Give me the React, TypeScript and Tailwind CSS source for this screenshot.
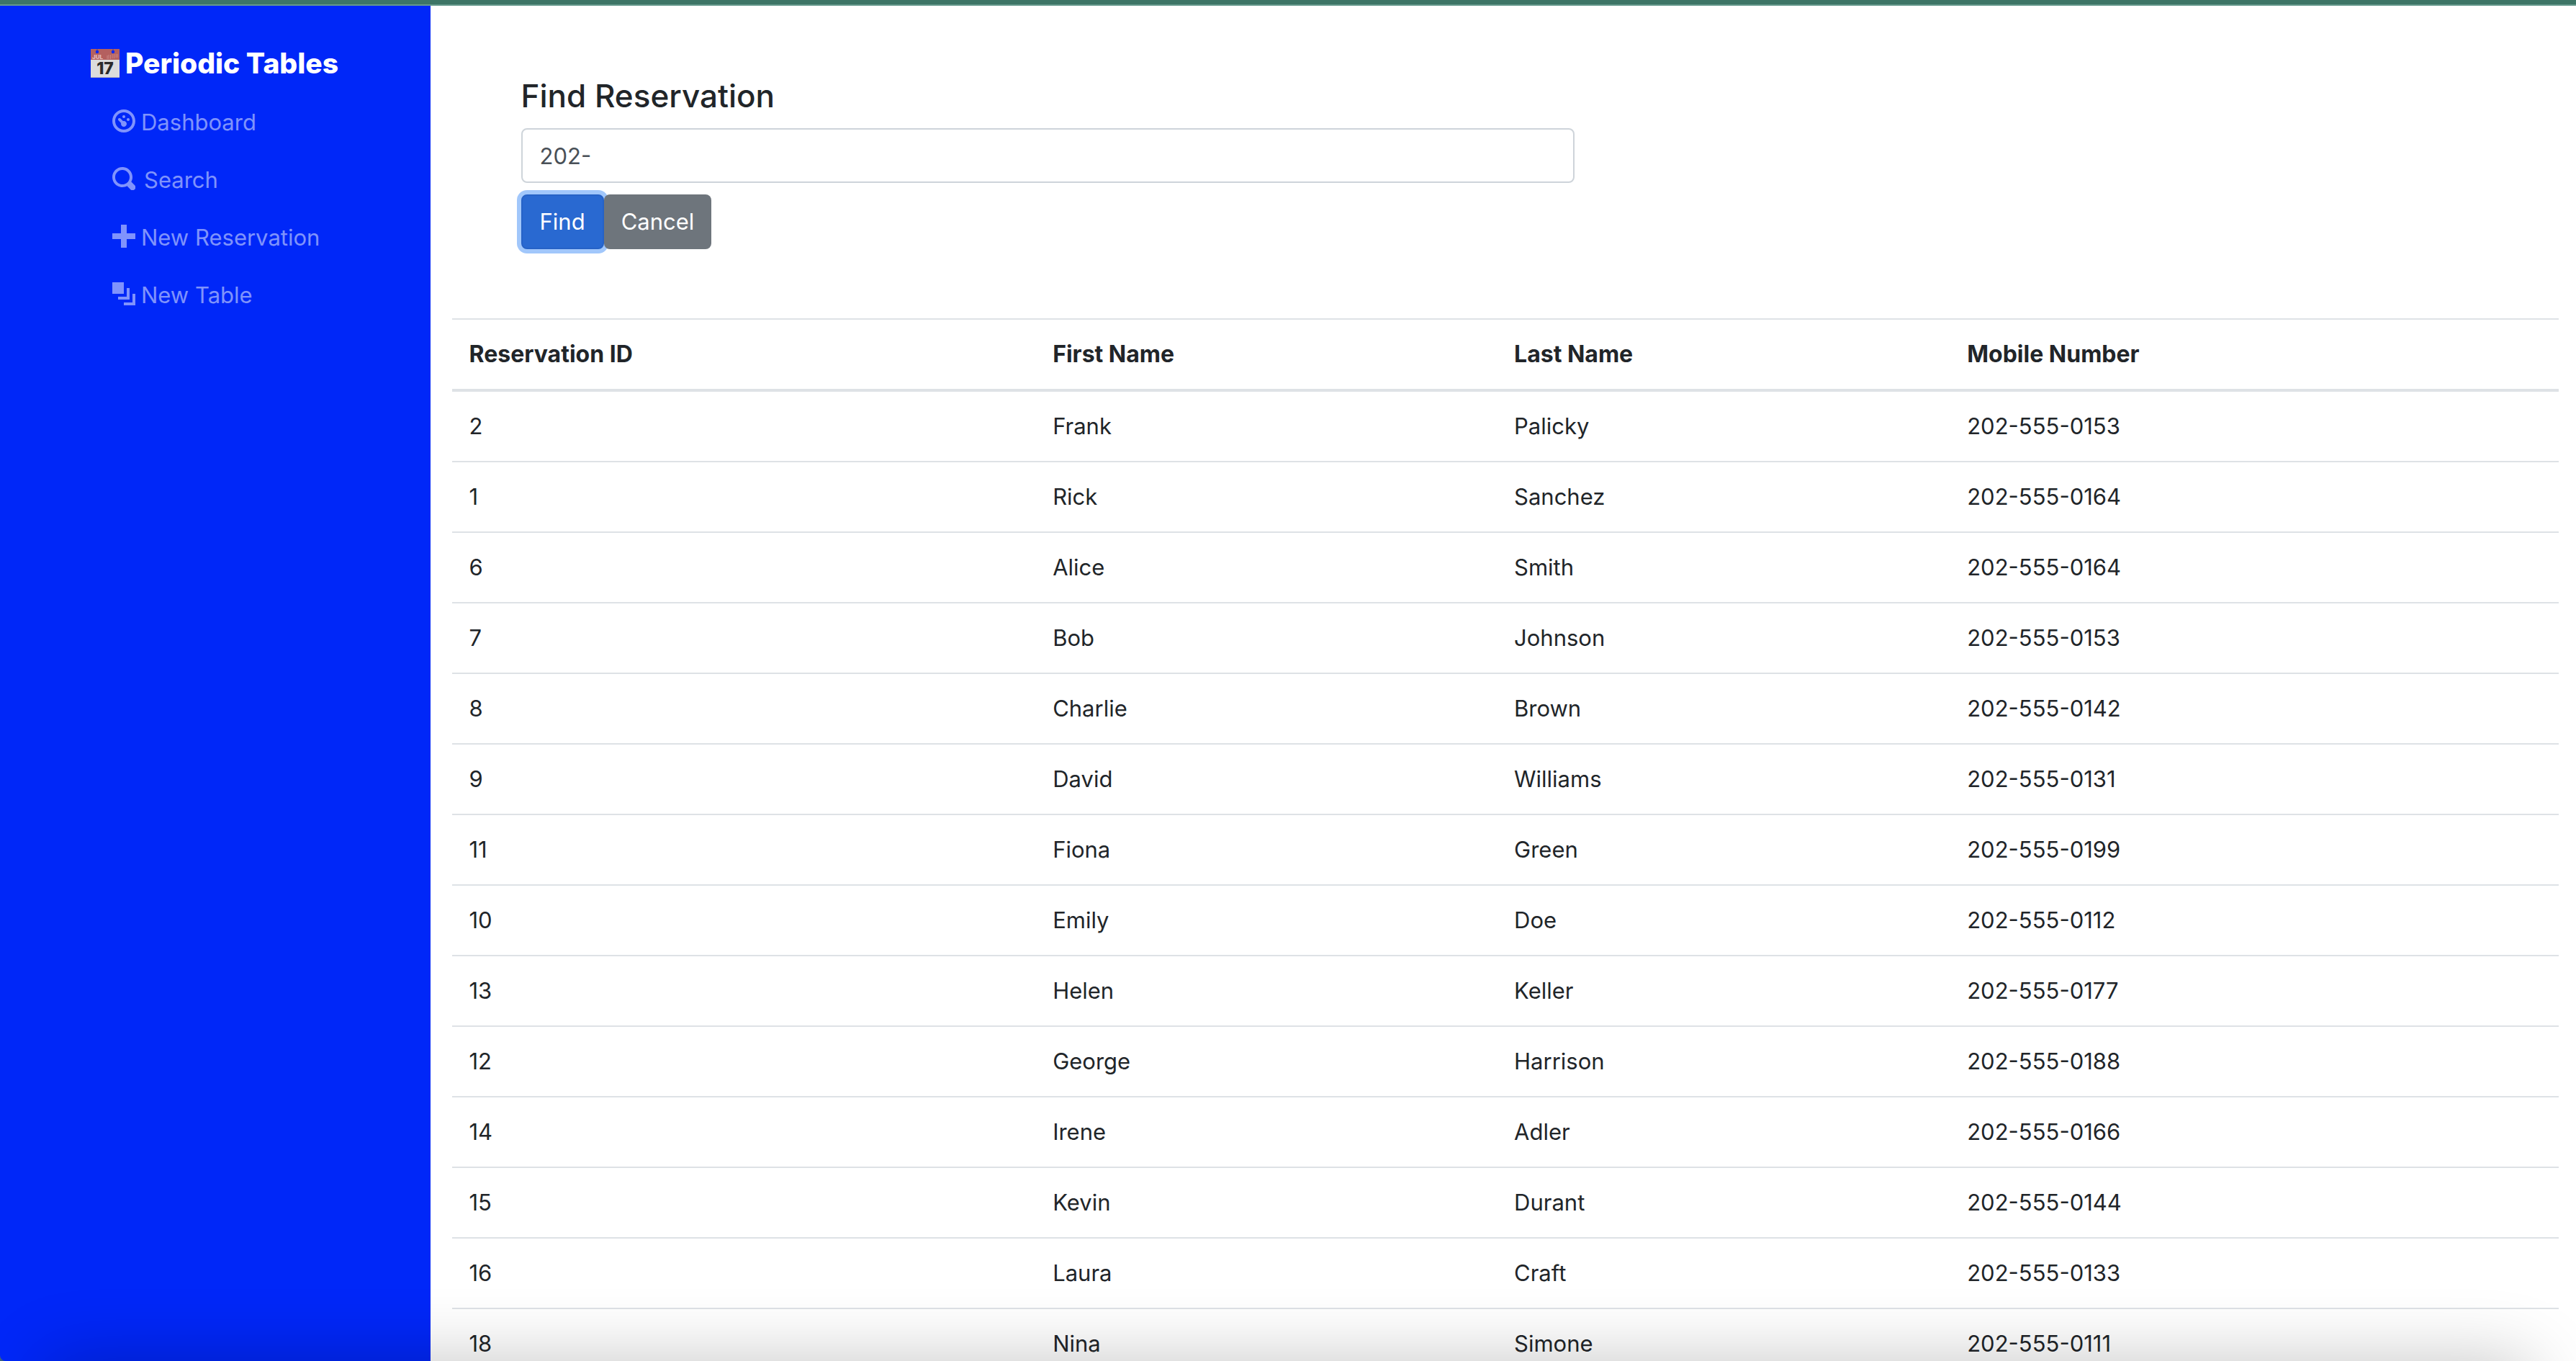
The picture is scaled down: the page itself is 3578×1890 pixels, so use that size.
const reservations = [
  [2, "Frank", "Palicky", "202-555-0153"],
  [1, "Rick", "Sanchez", "202-555-0164"],
  [6, "Alice", "Smith", "202-555-0164"],
  [7, "Bob", "Johnson", "202-555-0153"],
  [8, "Charlie", "Brown", "202-555-0142"],
  [9, "David", "Williams", "202-555-0131"],
  [11, "Fiona", "Green", "202-555-0199"],
  [10, "Emily", "Doe", "202-555-0112"],
  [13, "Helen", "Keller", "202-555-0177"],
  [12, "George", "Harrison", "202-555-0188"],
  [14, "Irene", "Adler", "202-555-0166"],
  [15, "Kevin", "Durant", "202-555-0144"],
  [16, "Laura", "Craft", "202-555-0133"],
  [18, "Nina", "Simone", "202-555-0111"],
];

const links = [
  {
    label: "Dashboard",
    d: "M4 0c-2.2 0-4 1.8-4 4s1.8 4 4 4 4-1.8 4-4-1.8-4-4-4zm0 1c1.66 0 3 1.34 3 3s-1.34 3-3 3-3-1.34-3-3 1.34-3 3-3zm0 1c-.28 0-.5.22-.5.5s.22.5.5.5.5-.22.5-.5-.22-.5-.5-.5zm-1.66 1a.5.5 0 0 0-.19.84l.91.91c-.02.08-.06.16-.06.25 0 .55.45 1 1 1s1-.45 1-1-.45-1-1-1c-.09 0-.17.04-.25.06l-.91-.91a.5.5 0 0 0-.44-.16.5.5 0 0 0-.06 0zm3.16 0c-.28 0-.5.22-.5.5s.22.5.5.5.5-.22.5-.5-.22-.5-.5-.5z",
  },
  {
    label: "Search",
    d: "M3.5 0c-1.93 0-3.5 1.57-3.5 3.5s1.57 3.5 3.5 3.5c.59 0 1.17-.14 1.66-.41a1 1 0 0 0 .13.13l1 1a1.02 1.02 0 1 0 1.44-1.44l-1-1a1 1 0 0 0-.16-.13c.27-.49.44-1.06.44-1.66 0-1.93-1.55-3.5-3.5-3.5zm0 1c1.39 0 2.5 1.11 2.5 2.5 0 .66-.24 1.27-.66 1.72-.01.01-.02.02-.03.03a1 1 0 0 0-.13.13c-.44.4-1.04.63-1.69.63-1.39 0-2.5-1.11-2.5-2.5s1.11-2.5 2.5-2.5z",
  },
  { label: "New Reservation", d: "M3 0v3h-3v2h3v3h2v-3h3v-2h-3v-3h-2z" },
  {
    label: "New Table",
    d: "M0 0v4h4v-4h-4zm5 2v3h-3v1h4v-4h-1zm2 2v3h-3v1h4v-4h-1z",
  },
];

function CalendarIcon() {
  return (
    <svg viewBox="0 0 40 40" className="size-10 shrink-0" aria-hidden="true">
      <rect width="40" height="40" fill="#dcdcdc" />
      <rect width="40" height="15" fill="#b4605f" />
      <rect y="39" width="40" height="1" fill="#a9a9c4" />
      <circle cx="9" cy="4" r="2.2" fill="#0027f8" />
      <circle cx="31" cy="4" r="2.2" fill="#0027f8" />
      <path d="M9 0v2M31 0v2" stroke="#6f4a86" strokeWidth="1.5" />
      <path
        d="M23 9v5M25 8v6M27.500 8v6M30 7v6M32.500 7v6M35 7v5M37 7v5"
        stroke="#c98583"
        strokeWidth="1"
      />
      <text x="2" y="13.500" fontFamily="Inter, sans-serif" fontSize="8" fill="#e3bdbc">
        JUL
      </text>
      <text
        x="20"
        y="35"
        textAnchor="middle"
        fontFamily="Inter, sans-serif"
        fontSize="23"
        fill="#2b2b2b"
      >
        17
      </text>
    </svg>
  );
}

function Sidebar() {
  return (
    <nav className="w-[16.7%] shrink-0 rounded-bl-lg bg-[#0027f8] pt-12">
      <a
        href="#"
        className="mb-[10px] ml-[126px] flex h-16 items-center gap-2 text-[39px] font-extrabold text-white"
      >
        <CalendarIcon />
        <span>Periodic Tables</span>
      </a>
      <ul className="ml-[156px]">
        {links.map((link) => (
          <li key={link.label}>
            <a href="#" className="flex h-20 items-center gap-2 text-white/50">
              <svg viewBox="0 0 8 8" className="mb-1 size-8 shrink-0 fill-current" aria-hidden="true">
                <path d={link.d} />
              </svg>
              <span className={link.label === "Search" ? "ml-1" : ""}>{link.label}</span>
            </a>
          </li>
        ))}
      </ul>
    </nav>
  );
}

function SearchForm() {
  return (
    <form className="ml-24 w-1/2 py-24" onSubmit={(e) => e.preventDefault()}>
      <label
        htmlFor="mobile_number"
        className="mb-4 block text-[44px] leading-[58px] font-medium"
      >
        Find Reservation
      </label>
      <input
        id="mobile_number"
        type="text"
        defaultValue="202-"
        className="mb-4 block h-19 w-full rounded-lg border-2 border-[#ced4da] bg-white px-6 text-[#495057] outline-none"
      />
      <div className="flex">
        <button
          type="submit"
          className="h-19 rounded-lg border-2 border-[#2662c6] bg-[#2969d1] px-6 text-white shadow-[0_0_0_6px_#a1c7fb]"
        >
          Find
        </button>
        <button type="button" className="relative h-19 rounded-lg bg-[#6e757c] px-6 text-white">
          Cancel
        </button>
      </div>
    </form>
  );
}

function ReservationTable() {
  return (
    <table className="w-full table-fixed border-separate border-spacing-0 text-left">
      <colgroup>
        <col className="w-[27.7%]" />
        <col className="w-[21.9%]" />
        <col className="w-[21.5%]" />
        <col />
      </colgroup>
      <thead>
        <tr>
          {["Reservation ID", "First Name", "Last Name", "Mobile Number"].map((h) => (
            <th
              key={h}
              scope="col"
              className="border-t-2 border-b-4 border-[#dee2e6] p-6 text-[32px] leading-[48px] font-bold"
            >
              {h}
            </th>
          ))}
        </tr>
      </thead>
      <tbody>
        {reservations.map((row, i) => (
          <tr key={row[0]}>
            {row.map((cell, j) => (
              <td
                key={j}
                className={i === 0 ? "p-6" : "border-t-2 border-[#dee2e6] p-6"}
              >
                {cell}
              </td>
            ))}
          </tr>
        ))}
      </tbody>
    </table>
  );
}

export default function App() {
  return (
    <div className="flex h-screen flex-col overflow-hidden bg-[#3d6480] font-[Inter,sans-serif] text-[31px] leading-[48px] text-[#212529]">
      <div className="h-2 shrink-0 border-b-2 border-[#65998c] bg-[#3d7566]" />
      <div className="flex min-h-0 grow">
        <Sidebar />
        <main className="min-w-0 grow overflow-hidden bg-white pr-6 pl-[30px]">
          <SearchForm />
          <ReservationTable />
        </main>
      </div>
      <div className="pointer-events-none fixed inset-x-16 top-full h-40 shadow-[0_0_100px_rgba(0,0,0,0.23)]" />
    </div>
  );
}
